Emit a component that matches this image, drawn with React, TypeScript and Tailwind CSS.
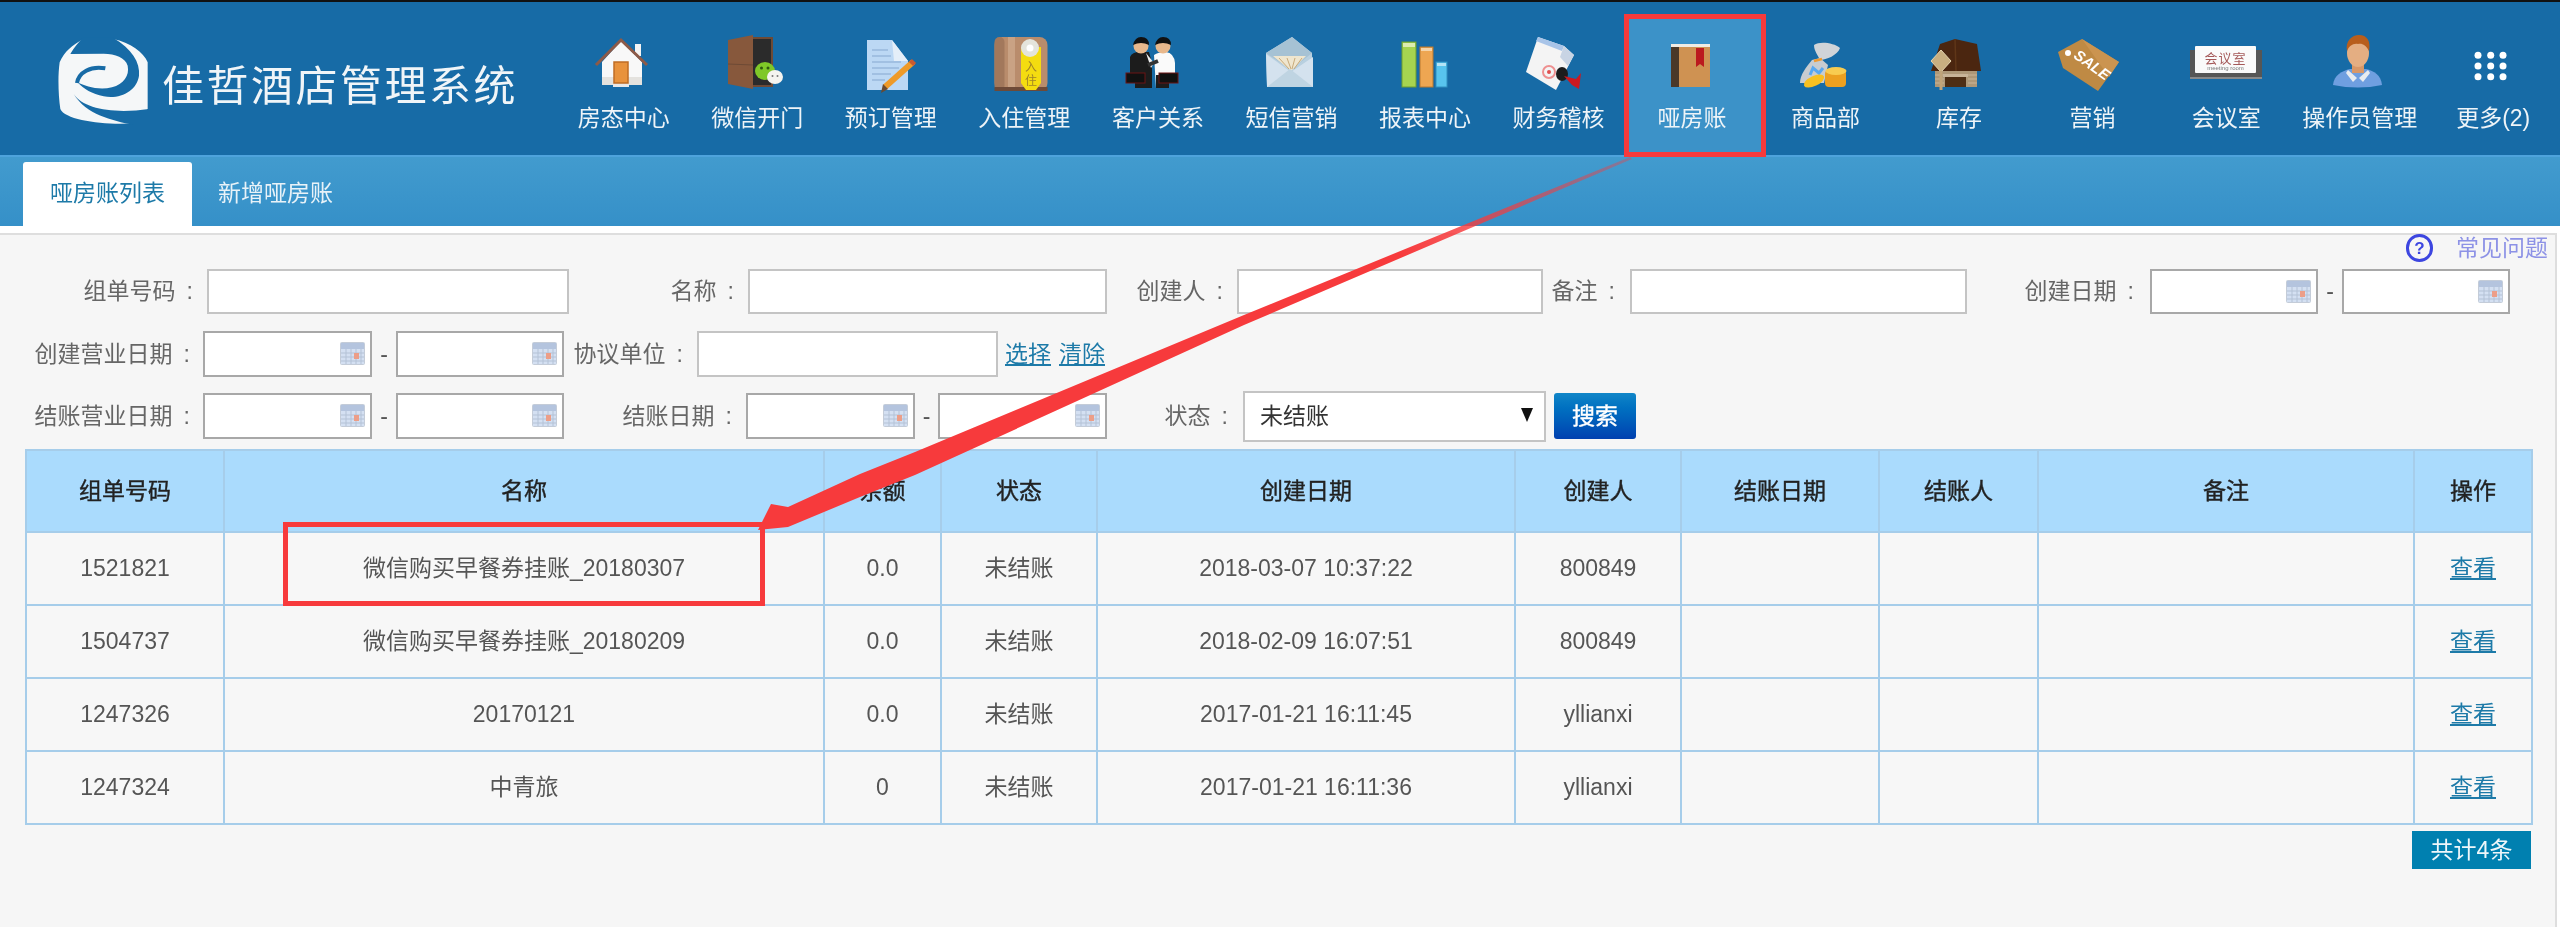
import React from "react";

const FONT = '"Liberation Sans", "Noto Sans CJK SC", sans-serif';

function Ico({ children }: { children: React.ReactNode }) {
  return (
    <svg viewBox="0 0 80 60" className="w-[80px] h-[60px] blur-[0.5px]" aria-hidden="true">
      {children}
    </svg>
  );
}

const icons: Record<string, React.ReactNode> = {
  home: (
    <Ico>
      <rect x="51" y="11" width="6" height="12" fill="#f4f4f4" />
      <path d="M37 8 L58 29 V52 H18 V29 Z" fill="#f8f8f8" />
      <path d="M18 44 H58 V52 H18 Z" fill="#e4e2de" />
      <path d="M12 32 L37 7 L63 32" fill="none" stroke="#8d5a48" strokeWidth="3" />
      <rect x="30" y="29" width="14" height="21" fill="#e8923c" stroke="#bf6c24" strokeWidth="1.5" />
      <rect x="29" y="51" width="16" height="3" fill="#e8e8e8" />
    </Ico>
  ),
  door: (
    <Ico>
      <rect x="35" y="5" width="20" height="48" fill="#2b2b2b" stroke="#6e4a35" strokeWidth="2" />
      <path d="M11 7 L36 2 V56 L11 51 Z" fill="#87583c" />
      <path d="M11 31 L36 32" stroke="#6e4a35" strokeWidth="1" />
      <ellipse cx="48" cy="38" rx="10" ry="9" fill="#7fc828" />
      <circle cx="44.500" cy="35" r="1.500" fill="#2f5a10" />
      <circle cx="51" cy="35" r="1.500" fill="#2f5a10" />
      <ellipse cx="58" cy="44" rx="8" ry="7" fill="#f4f4f0" />
      <circle cx="55.500" cy="43" r="1" fill="#777" />
      <circle cx="60.500" cy="43" r="1" fill="#777" />
    </Ico>
  ),
  doc: (
    <Ico>
      <path d="M16 7 H41 L57 28 V57 H16 Z" fill="#bcd8f4" />
      <path d="M41 7 L57 28 H43 Z" fill="#e4eef8" />
      <path d="M21 17 H37 M21 23 H40 M21 29 H50 M21 35 H48 M21 41 H40 M21 47 H34" stroke="#98b8dc" strokeWidth="1.500" />
      <path d="M34 54 L62 29" stroke="#ee9a28" strokeWidth="6" />
      <path d="M60 31 L63 28" stroke="#c85a30" strokeWidth="6" />
      <path d="M30 60 L32 51 L37 56 Z" fill="#6a4a30" />
    </Ico>
  ),
  checkin: (
    <Ico>
      <rect x="10.500" y="4" width="53" height="54" rx="8" fill="#b98c6c" />
      <rect x="10.500" y="4" width="10" height="54" rx="5" fill="#a2785c" />
      <rect x="24" y="4" width="7" height="54" fill="#c9a284" />
      <rect x="10.500" y="54" width="53" height="4" fill="#6e4a38" />
      <path d="M37 14 H57 V50 L52 57 H42 L37 50 Z" fill="#f4dc10" />
      <circle cx="46" cy="15" r="9" fill="#e4e4dc" />
      <circle cx="46" cy="15" r="3.500" fill="#fff" />
      <text x="47" y="38" textAnchor="middle" fontSize="12" fill="#a08428" fontFamily='"Noto Sans CJK SC", sans-serif'>入</text>
      <text x="47" y="52" textAnchor="middle" fontSize="12" fill="#a08428" fontFamily='"Noto Sans CJK SC", sans-serif'>住</text>
    </Ico>
  ),
  men: (
    <Ico>
      <path d="M12 24 Q14 19 22 19 H31 L34 30 V55 H17 V42 H12 Z" fill="#1c1c1c" />
      <path d="M36 22 Q40 19 48 19 Q56 20 57 30 V40 H51 V55 H38 Z" fill="#fafafa" />
      <path d="M38 42 H51 V55 H38 Z" fill="#1c1c1c" />
      <path d="M28 20 L33 35 L36 30 Z" fill="#f0f0f0" />
      <circle cx="23" cy="13" r="7.500" fill="#e8b88c" />
      <path d="M15 12 Q17 4 23 4 Q31 4 31 12 Q23 8 15 12 Z" fill="#111" />
      <circle cx="45" cy="13" r="7.500" fill="#e8b88c" />
      <path d="M37 12 Q39 4 45 4 Q53 4 53 12 Q45 8 37 12 Z" fill="#111" />
      <path d="M30 32 L40 28" stroke="#333" strokeWidth="4" />
      <rect x="8" y="40" width="19" height="10" fill="#111" stroke="#6a1414" strokeWidth="1" />
      <rect x="41" y="40" width="19" height="10" fill="#111" stroke="#6a1414" strokeWidth="1" />
    </Ico>
  ),
  mail: (
    <Ico>
      <path d="M15 20 L41 4 L61 20 L62 54 H16 Z" fill="#b8d0e0" />
      <path d="M15 20 L41 4 L61 20 L40 37 Z" fill="#a6c2d4" />
      <path d="M22 23 H55 L40 38 Z" fill="#efe6cf" />
      <path d="M28 25 L38 36 M36 25 L40 36 M44 25 L41 36 M51 25 L43 36" stroke="#c8aa7a" strokeWidth="1" />
      <path d="M15 21 L40 39 L62 24 V54 H16 Z" fill="#d4e2ee" />
      <path d="M16 54 L39 36 L62 54 Z" fill="#bfd4e2" />
    </Ico>
  ),
  bars: (
    <Ico>
      <rect x="17" y="9" width="14" height="45" fill="#a6d450" stroke="#6e9e30" strokeWidth="1" />
      <rect x="18" y="10" width="12" height="4" fill="#dcecb0" />
      <rect x="35" y="14" width="13" height="40" fill="#eea652" stroke="#b87830" strokeWidth="1" />
      <rect x="36" y="15" width="11" height="3" fill="#f6d4a8" />
      <rect x="51" y="29" width="11" height="25" fill="#58c4ee" stroke="#3090c0" strokeWidth="1" />
      <rect x="52" y="30" width="9" height="3" fill="#b4e4f6" />
    </Ico>
  ),
  stamp: (
    <Ico>
      <path d="M20 4 L46 13 L56 22 L38 57 L8 39 Z" fill="#f4f4f4" />
      <path d="M20 4 L46 13 L44 18 L18 8 Z" fill="#a8c4e8" />
      <path d="M46 13 L56 22 L50 33 L42 24 Z" fill="#c8d4e4" />
      <circle cx="31" cy="39" r="6" fill="none" stroke="#ee9090" strokeWidth="2" />
      <circle cx="31" cy="39" r="2" fill="#e05050" />
      <ellipse cx="44" cy="41" rx="6" ry="7" fill="#1c1c1c" />
      <path d="M46 43 L58 46 L63 40 L61 56 L54 52 Z" fill="#cc1820" />
    </Ico>
  ),
  book: (
    <Ico>
      <rect x="19" y="11" width="39" height="43" fill="#c88c4c" />
      <rect x="27" y="14" width="31" height="40" fill="#cf9252" />
      <rect x="19" y="13" width="8" height="41" fill="#4a3828" />
      <rect x="19" y="11" width="39" height="3" fill="#f0ece4" />
      <path d="M44 15 H52 V34 L48 31 L44 34 Z" fill="#bb1a1e" />
    </Ico>
  ),
  bag: (
    <Ico>
      <path d="M26 27 C20 34 14 42 14 50 H38 L42 32 L34 25 Z" fill="#c8ccd0" />
      <path d="M28 12 C34 8 48 10 54 15 C52 22 40 27 34 27 C32 22 28 18 28 12 Z" fill="#d0d4d8" />
      <path d="M28 28 L36 26" stroke="#ee9a30" strokeWidth="2.500" />
      <path d="M24 42 L27 35 L33 40 L37 35" fill="none" stroke="#58a8f0" strokeWidth="3" />
      <rect x="39" y="37" width="21" height="17" rx="4" fill="#eca020" />
      <ellipse cx="50" cy="38" rx="10.500" ry="4" fill="#f8cc50" />
      <ellipse cx="28" cy="48" rx="11" ry="5" fill="#f8c020" transform="rotate(-25 28 48)" />
    </Ico>
  ),
  barn: (
    <Ico>
      <rect x="16" y="38" width="42" height="16" fill="#ae9878" />
      <path d="M16 42 H58 M16 46 H25 M49 46 H58 M16 50 H25 M49 50 H58" stroke="#c8b498" strokeWidth="1" />
      <rect x="26" y="44" width="21" height="10" fill="#4e2e14" />
      <rect x="24" y="41" width="25" height="3" fill="#c8b498" />
      <path d="M21 11 L36 6 L58 11 L62 38 H12 Z" fill="#4b2610" />
      <path d="M36 6 L37 38" stroke="#5f3618" strokeWidth="1.500" />
      <path d="M22 17 L32 28 L22 39 L12 28 Z" fill="#c8ae80" stroke="#e4d4b0" strokeWidth="1" />
      <rect x="20.500" y="38" width="3" height="19" fill="#c0a47a" />
    </Ico>
  ),
  sale: (
    <Ico>
      <path d="M5 19 L29 6 L66 29 L45 58 L10 35 Z" fill="#bf8a44" />
      <path d="M29 6 L66 29 L56 44 Z" fill="#cb9450" />
      <circle cx="15" cy="20" r="3" fill="#fff" />
      <text
        x="39"
        y="37"
        textAnchor="middle"
        fontSize="15"
        fontWeight="700"
        fill="#fff"
        fontStyle="italic"
        fontFamily='"Liberation Sans", sans-serif'
        transform="rotate(36 39 32)"
      >
        SALE
      </text>
    </Ico>
  ),
  room: (
    <Ico>
      <rect x="4" y="17" width="72" height="27" fill="#565656" />
      <rect x="4" y="44" width="72" height="2" fill="#8a8a8a" />
      <rect x="9" y="13" width="61" height="27" rx="1" fill="#fafafa" />
      <text x="39.500" y="30" textAnchor="middle" fontSize="13" letterSpacing="1" fill="#a45858" fontFamily='"Noto Sans CJK SC", sans-serif'>会议室</text>
      <text x="39.500" y="37" textAnchor="middle" fontSize="6" fill="#777" fontFamily='"Liberation Sans", sans-serif'>meeting room</text>
    </Ico>
  ),
  person: (
    <Ico>
      <path d="M13 52 C14 42 22 38 30 36 H46 C54 38 61 42 62 52 Q38 57 13 52 Z" fill="#6f9fe0" />
      <path d="M28 37 L37 45 L33 49 L26 40 Z M48 37 L39 45 L43 49 L50 40 Z" fill="#e8ecf0" />
      <rect x="32" y="28" width="12" height="12" fill="#d89868" />
      <ellipse cx="38" cy="20" rx="11" ry="14" fill="#e4ae82" />
      <path d="M27 18 C25 8 32 2 39 2 C47 2 51 8 49 18 C46 12 42 10 38 11 C33 10 29 13 27 18 Z" fill="#b85e1c" />
    </Ico>
  ),
  more: (
    <Ico>
      {[25, 37.7, 50].map((x) =>
        [22.3, 33, 43.7].map((y) => <circle key={`${x}-${y}`} cx={x} cy={y} r="3.500" fill="#fff" />)
      )}
    </Ico>
  ),
};

const nav = [
  ["房态中心", "home"],
  ["微信开门", "door"],
  ["预订管理", "doc"],
  ["入住管理", "checkin"],
  ["客户关系", "men"],
  ["短信营销", "mail"],
  ["报表中心", "bars"],
  ["财务稽核", "stamp"],
  ["哑房账", "book"],
  ["商品部", "bag"],
  ["库存", "barn"],
  ["营销", "sale"],
  ["会议室", "room"],
  ["操作员管理", "person"],
  ["更多(2)", "more"],
];

function Logo() {
  return (
    <svg viewBox="50 34 276 264" className="w-[92px] h-[88px] shrink-0 blur-[0.5px]" aria-hidden="true">
      <path
        d="M130 40 C95 58 72 78 58 110 C52 150 54 210 60 250 C75 285 200 300 290 292 L322 250 V110 C310 80 270 50 218 40 L180 60 Z"
        fill="#f5f7f8"
      />
      <path
        d="M218 36 C275 70 300 110 296 150 C290 195 240 222 190 212 C155 205 130 190 112 170 C135 182 175 195 215 185 C250 175 268 150 262 120 C255 95 225 85 190 84 L90 85 C100 65 115 50 128 36 Z"
        fill="#176ba6"
      />
      <path d="M195 128 C150 120 115 140 110 172" fill="none" stroke="#176ba6" strokeWidth="12" />
      <path d="M100 205 C130 250 220 265 326 250 V300 H290 C220 285 140 270 100 205 Z" fill="#176ba6" />
    </svg>
  );
}

const inputCls = "h-full bg-white border-2 border-[#c4c4c4] outline-none";

function DateBox({ w }: { w: string }) {
  return (
    <div className={`relative h-full bg-white border-2 border-[#a8a8a8] ${w}`}>
      <svg viewBox="0 0 25 23" className="absolute right-[5px] top-[9px] w-[25px] h-[23px] blur-[0.5px]" aria-hidden="true">
        <rect x="0.500" y="0.500" width="24" height="22" rx="1" fill="#d4e0f2" stroke="#c4ccd8" />
        <rect x="1" y="1" width="23" height="6" fill="#b4c4de" />
        <path d="M1 11 H24 M1 15 H24 M1 19 H24 M6 7 V22 M11 7 V22 M16 7 V22 M21 7 V22" stroke="#b4c2d6" strokeWidth="1" />
        <rect x="14" y="11" width="5" height="6" fill="#ec9e88" />
      </svg>
    </div>
  );
}

function Dash({ w }: { w: string }) {
  return <span className={`${w} text-center text-[#555]`}>-</span>;
}

function Label({ w, children }: { w: string; children: React.ReactNode }) {
  return (
    <span className={`${w} text-right text-[#666] whitespace-nowrap`}>
      {children}
      <span className="ml-[11px] mr-[-1px]">:</span>
    </span>
  );
}

const columns = [
  ["组单号码", "w-[198px]"],
  ["名称", "w-[600px]"],
  ["余额", "w-[117px]"],
  ["状态", "w-[156px]"],
  ["创建日期", "w-[418px]"],
  ["创建人", "w-[166px]"],
  ["结账日期", "w-[198px]"],
  ["结账人", "w-[159px]"],
  ["备注", "w-[376px]"],
  ["操作", "w-[118px]"],
];

const rows = [
  ["1521821", "微信购买早餐券挂账_20180307", "0.0", "未结账", "2018-03-07 10:37:22", "800849"],
  ["1504737", "微信购买早餐券挂账_20180209", "0.0", "未结账", "2018-02-09 16:07:51", "800849"],
  ["1247326", "20170121", "0.0", "未结账", "2017-01-21 16:11:45", "yllianxi"],
  ["1247324", "中青旅", "0", "未结账", "2017-01-21 16:11:36", "yllianxi"],
];

const cell = "border-2 border-[#a6cdea] text-center font-normal p-0";

export default function App() {
  return (
    <div
      className="relative w-full h-[929px] overflow-hidden bg-white text-[23px] blur-[0.45px]"
      style={{ fontFamily: FONT }}
    >
      {/* Header */}
      <header className="flex h-[155px] border-t-2 border-[#111] bg-[#176ba6] text-[#eef4f8]">
        <div className="flex w-[557px] shrink-0 items-start pl-[57px] pt-[35px]">
          <Logo />
          <span className="ml-[13px] mt-[29px] text-[42px] leading-[42px] tracking-[2.5px] text-[#f0f5f8] whitespace-nowrap">
            佳哲酒店管理系统
          </span>
        </div>
        <nav className="flex flex-1">
          {nav.map(([label, ic]) => {
            const active = label === "哑房账";
            return (
              <div key={label} className="relative flex flex-1 flex-col items-center pt-[31px]">
                {active && (
                  <div className="absolute left-[-1px] top-[12px] w-[142px] h-[143px] border-[5px] border-[#f73a3c] bg-[#3c92c8]" />
                )}
                <div className="relative">{icons[ic]}</div>
                <span className="relative mt-[10px] leading-[30px] whitespace-nowrap">{label}</span>
              </div>
            );
          })}
        </nav>
      </header>

      {/* Sub navigation */}
      <div className="flex h-[71px] items-end border-t-2 border-[#4ea3dc] bg-gradient-to-b from-[#429bce] to-[#3590c8] pl-[23px]">
        <div className="flex h-[64px] w-[169px] items-center justify-center rounded-t-[3px] bg-white pb-[2px] text-[#1d7aa8]">
          哑房账列表
        </div>
        <div className="ml-[26px] flex h-[64px] items-center pb-[2px] text-[#e8f2f8]">新增哑房账</div>
      </div>
      <div className="h-[7px] bg-white" />

      {/* Content */}
      <main className="h-[694px] w-[2557px] border-t-2 border-r-2 border-[#dedede] bg-[#f6f6f6]">
        <div className="flex h-[34px] items-center justify-end pb-[8px] pr-[7px] text-[#8d92e6]">
          <span className="mr-[23px] flex h-[28px] w-[27px] items-center justify-center rounded-full border-[3px] border-[#3d46e0] text-[17px] font-bold leading-none text-[#3d46e0]">
            ?
          </span>
          <span>常见问题</span>
        </div>

        <div className="flex h-[45px] items-center">
          <Label w="w-[192px]">组单号码</Label>
          <input className={`${inputCls} ml-[15px] w-[362px]`} />
          <Label w="w-[164px]">名称</Label>
          <input className={`${inputCls} ml-[15px] w-[359px]`} />
          <Label w="w-[115px]">创建人</Label>
          <input className={`${inputCls} ml-[15px] w-[306px]`} />
          <Label w="w-[71px]">备注</Label>
          <input className={`${inputCls} ml-[16px] w-[337px]`} />
          <Label w="w-[166px]">创建日期</Label>
          <div className="ml-[17px] h-full">
            <DateBox w="w-[168px]" />
          </div>
          <Dash w="w-[24px]" />
          <DateBox w="w-[168px]" />
        </div>

        <div className="mt-[17px] flex h-[46px] items-center">
          <Label w="w-[189px]">创建营业日期</Label>
          <div className="ml-[14px] h-full">
            <DateBox w="w-[169px]" />
          </div>
          <Dash w="w-[24px]" />
          <DateBox w="w-[168px]" />
          <Label w="w-[118px]">协议单位</Label>
          <input className={`${inputCls} ml-[15px] w-[301px]`} />
          <a className="ml-[7px] text-[#1d7aa8] underline">选择</a>
          <a className="ml-[8px] text-[#1d7aa8] underline">清除</a>
        </div>

        <div className="mt-[16px] flex h-[46px] items-center">
          <Label w="w-[189px]">结账营业日期</Label>
          <div className="ml-[14px] h-full">
            <DateBox w="w-[169px]" />
          </div>
          <Dash w="w-[24px]" />
          <DateBox w="w-[168px]" />
          <Label w="w-[167px]">结账日期</Label>
          <div className="ml-[15px] h-full">
            <DateBox w="w-[169px]" />
          </div>
          <Dash w="w-[23px]" />
          <DateBox w="w-[169px]" />
          <Label w="w-[120px]">状态</Label>
          <div className="relative ml-[16px] h-[51px] w-[303px] shrink-0">
            <select className="h-full w-full appearance-none border-2 border-[#c4c4c4] bg-white pl-[15px] text-[#333] outline-none">
              <option>未结账</option>
            </select>
            <svg viewBox="0 0 12 14" className="pointer-events-none absolute right-[13px] top-[17px] w-[12px] h-[14px]" aria-hidden="true">
              <path d="M0 0 H12 L6 14 Z" fill="#111" />
            </svg>
          </div>
          <button className="ml-[8px] h-[46px] w-[82px] rounded-[3px] bg-gradient-to-b from-[#1186c8] to-[#0040b0] text-white [-webkit-text-stroke:0.4px_#fff]">
            搜索
          </button>
        </div>

        <table className="ml-[25px] mt-[10px] w-[2506px] table-fixed border-collapse">
          <thead>
            <tr className="h-[82px] bg-[#aadbfd] text-[#222]">
              {columns.map(([t, w]) => (
                <th key={t} className={`${cell} ${w} border-[#96c3e4] [-webkit-text-stroke:0.4px_#222]`}>
                  {t}
                </th>
              ))}
            </tr>
          </thead>
          <tbody className="text-[#555]">
            {rows.map((r) => (
              <tr key={r[0]} className="h-[73px] bg-[#f7f7f7]">
                {r.map((c, i) => (
                  <td key={i} className={cell}>
                    {c}
                  </td>
                ))}
                <td className={cell} />
                <td className={cell} />
                <td className={cell} />
                <td className={cell}>
                  <a className="text-[#1d7aa8] underline">查看</a>
                </td>
              </tr>
            ))}
          </tbody>
        </table>

        <div className="mr-[24px] mt-[6px] flex justify-end">
          <div className="flex h-[38px] w-[119px] items-center justify-center bg-[#0080b0] text-[#eef6fa]">共计4条</div>
        </div>
      </main>

      {/* Annotation overlays */}
      <div className="absolute left-[283px] top-[522px] h-[84px] w-[482px] border-[5px] border-[#f73a3c]" />
      <svg viewBox="0 0 2560 929" className="pointer-events-none absolute left-0 top-0 w-[2560px] h-[929px]" aria-hidden="true">
        <defs>
          <linearGradient id="arrowFade" gradientUnits="userSpaceOnUse" x1="1630" y1="157" x2="1400" y2="255">
            <stop offset="0" stopColor="#f73a3c" stopOpacity="0.35" />
            <stop offset="1" stopColor="#f73a3c" />
          </linearGradient>
        </defs>
        <path
          d="M1630 157 L1244 315 L915 452 L860 474 L788 507 L771 504 L758 530 L788 527 L860 497 L915 475 L1244 325 L1632 159 Z"
          fill="url(#arrowFade)"
        />
      </svg>
    </div>
  );
}
